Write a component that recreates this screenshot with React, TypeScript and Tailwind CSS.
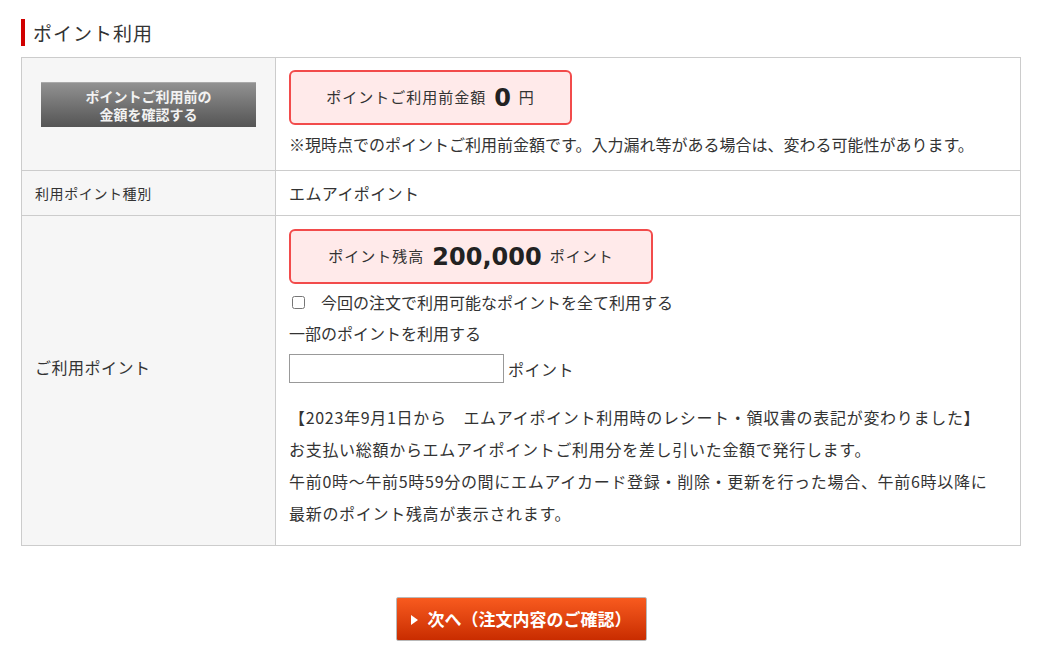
import React from "react";

const jp = { fontFamily: '"Noto Sans CJK JP", "Noto Sans", sans-serif' };
const num = { fontFamily: '"DejaVu Sans", Verdana, sans-serif' };

function PointBox({ label, value, unit, width }: { label: string; value: string; unit: string; width: string }) {
  return (
    <div
      className={`${width} h-[55px] flex items-center justify-center gap-[8px] border-2 border-[#f24b4b] rounded-[6px] bg-[#ffeaea] text-[#333]`}
    >
      <span className="text-[15px] tracking-[1px]">{label}</span>
      <span className="text-[24px] font-bold text-[#222] leading-none" style={num}>
        {value}
      </span>
      <span className="text-[15px] tracking-[1px]">{unit}</span>
    </div>
  );
}

export default function App() {
  return (
    <div className="bg-white min-h-[666px] text-[#333]" style={jp}>
      <div className="w-[1000px] ml-[21px] pt-[19px]">
        <h2 className="flex items-center h-[27px] border-l-[4px] border-[#d10000] pl-[8px] text-[19px] tracking-[1px] font-normal leading-none">
          ポイント利用
        </h2>

        <table className="mt-[11px] w-full border-collapse border border-[#ccc]">
          <tbody>
            <tr>
              <th className="w-[254px] bg-[#f6f6f6] border border-[#ccc] align-top pt-[24px] font-normal">
                <div className="mx-auto w-[215px] h-[45px] flex flex-col items-center justify-center bg-gradient-to-b from-[#939393] to-[#555] text-[#f2f2f2] text-[14px] font-bold leading-[18px] shadow-[inset_0_1px_0_#aaa]">
                  <span>ポイントご利用前の</span>
                  <span>金額を確認する</span>
                </div>
              </th>
              <td className="border border-[#ccc] px-[13px] pt-[12px] pb-[14px] align-top">
                <PointBox label="ポイントご利用前金額" value="0" unit="円" width="w-[283px]" />
                <p className="mt-[7px] text-[16px] leading-[24px]">
                  ※現時点でのポイントご利用前金額です。入力漏れ等がある場合は、変わる可能性があります。
                </p>
              </td>
            </tr>
            <tr>
              <th className="bg-[#f6f6f6] border border-[#ccc] h-[45px] px-[13px] text-left text-[14px] tracking-[0.6px] font-normal">
                利用ポイント種別
              </th>
              <td className="border border-[#ccc] px-[13px] text-[16px] tracking-[0.4px]">エムアイポイント</td>
            </tr>
            <tr>
              <th className="bg-[#f6f6f6] border border-[#ccc] px-[13px] pb-[28px] text-left text-[16px] tracking-[0.5px] font-normal">
                ご利用ポイント
              </th>
              <td className="border border-[#ccc] px-[13px] pt-[13px] pb-[16px] align-top text-[16px]">
                <PointBox label="ポイント残高" value="200,000" unit="ポイント" width="w-[364px]" />
                <label className="mt-[3px] flex items-center leading-[31px]">
                  <input type="checkbox" className="ml-[3px] w-[13px] h-[13px]" />
                  <span className="ml-[16px]">今回の注文で利用可能なポイントを全て利用する</span>
                </label>
                <p className="leading-[31px]">一部のポイントを利用する</p>
                <div className="mt-[5px] flex items-center gap-[4px]">
                  <input type="text" className="w-[215px] h-[29px] border border-[#999] bg-white px-[4px]" />
                  <span className="tracking-[0.5px]">ポイント</span>
                </div>
                <div className="mt-[18px] leading-[32px] tracking-[0.7px]">
                  <p>【2023年9月1日から　エムアイポイント利用時のレシート・領収書の表記が変わりました】</p>
                  <p>お支払い総額からエムアイポイントご利用分を差し引いた金額で発行します。</p>
                  <p>午前0時～午前5時59分の間にエムアイカード登録・削除・更新を行った場合、午前6時以降に</p>
                  <p>最新のポイント残高が表示されます。</p>
                </div>
              </td>
            </tr>
          </tbody>
        </table>

        <div className="mt-[51px] flex justify-center">
          <button className="w-[251px] h-[44px] flex items-center justify-center gap-[10px] border border-[#b9b9b9] bg-gradient-to-b from-[#f85a1e] to-[#c92c00] text-white text-[17px] font-bold rounded-[2px]">
            <svg width="7" height="10" viewBox="0 0 7 10" className="mt-[1px]">
              <path d="M0 0 L7 5 L0 10 Z" fill="#fff" />
            </svg>
            <span>次へ（注文内容のご確認）</span>
          </button>
        </div>
      </div>
    </div>
  );
}
